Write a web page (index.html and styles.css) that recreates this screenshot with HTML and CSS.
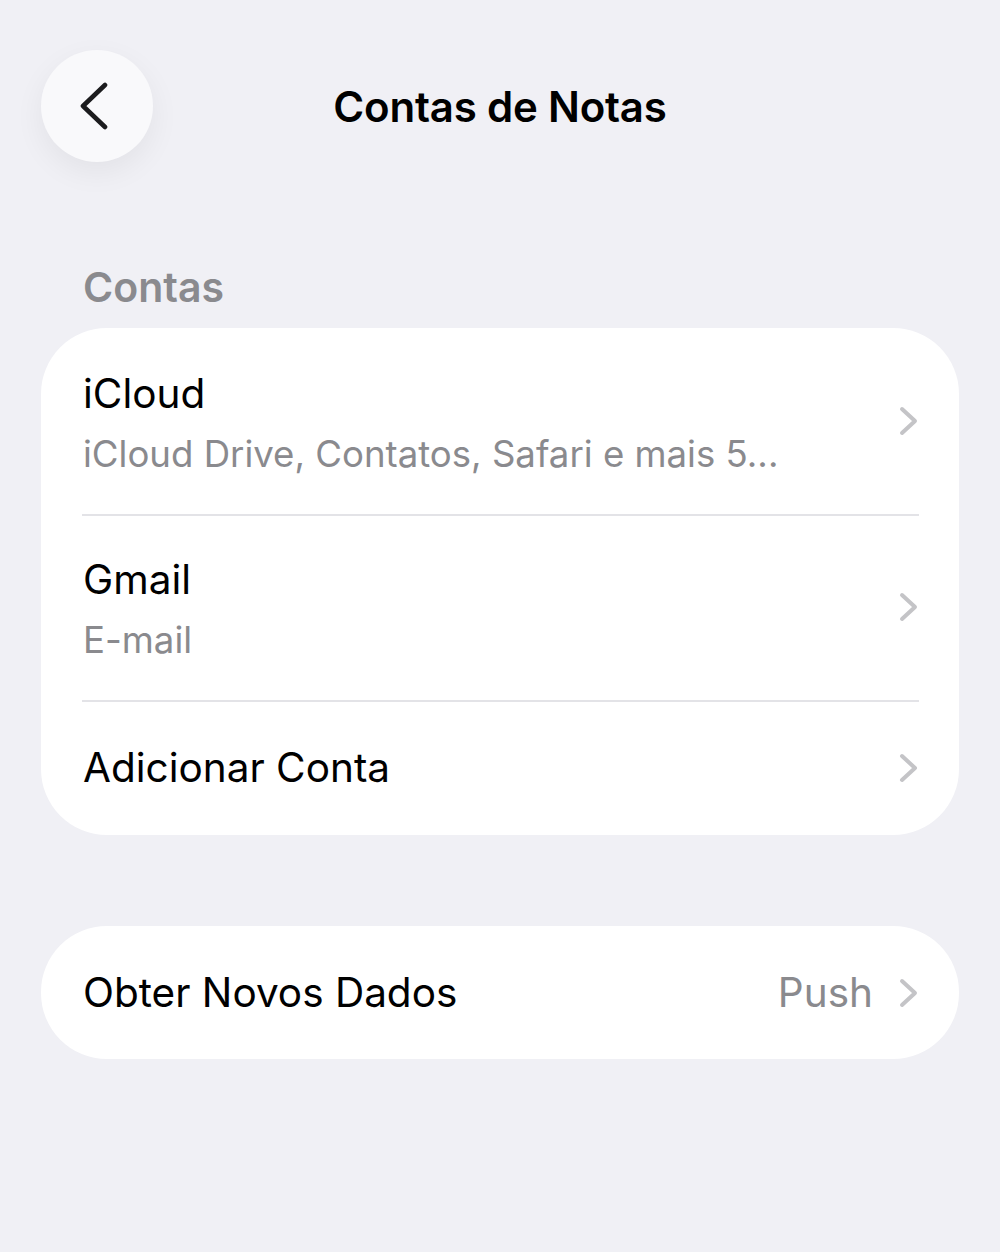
FILE: index.html
```html
<!DOCTYPE html>
<html lang="pt-BR">
<head>
    <meta charset="UTF-8">
    <meta name="viewport" content="width=device-width, initial-scale=1.0">
    <title>Contas de Notas</title>
    <link rel="stylesheet" href="styles.css">
</head>
<body>
    <!-- Navigation bar -->
    <header class="nav-bar">
        <button class="back-button" aria-label="Voltar">
            <svg width="30" height="48" viewBox="0 0 30 48">
                <path d="M26 3 L4 24 L26 45" fill="none" stroke="#1c1c1e" stroke-width="4.6" stroke-linecap="round" stroke-linejoin="round"/>
            </svg>
        </button>
        <h1 class="nav-title">Contas de Notas</h1>
        <div class="nav-spacer"></div>
    </header>

    <!-- Accounts -->
    <section class="group">
        <h2 class="group-title">Contas</h2>
        <div class="card">
            <a class="row row-double">
                <div class="row-text">
                    <div class="row-label">iCloud</div>
                    <div class="row-detail">iCloud Drive, Contatos, Safari e mais 5...</div>
                </div>
                <svg class="chevron" width="20" height="30" viewBox="0 0 20 30"><path d="M3 3 L16 15 L3 27"/></svg>
            </a>
            <a class="row row-double">
                <div class="row-text">
                    <div class="row-label">Gmail</div>
                    <div class="row-detail">E-mail</div>
                </div>
                <svg class="chevron" width="20" height="30" viewBox="0 0 20 30"><path d="M3 3 L16 15 L3 27"/></svg>
            </a>
            <a class="row">
                <div class="row-text">
                    <div class="row-label">Adicionar Conta</div>
                </div>
                <svg class="chevron" width="20" height="30" viewBox="0 0 20 30"><path d="M3 3 L16 15 L3 27"/></svg>
            </a>
        </div>
    </section>

    <!-- Fetch settings -->
    <section class="group group-plain">
        <div class="card">
            <a class="row row-single">
                <div class="row-text">
                    <div class="row-label">Obter Novos Dados</div>
                </div>
                <span class="row-value">Push</span>
                <svg class="chevron" width="20" height="30" viewBox="0 0 20 30"><path d="M3 3 L16 15 L3 27"/></svg>
            </a>
        </div>
    </section>
</body>
</html>
```

FILE: styles.css
```css
/* Main Styles */
body {
    font-family: Inter, "Noto Sans", Roboto, sans-serif;
    margin: 0;
    padding: 50px 41px 0 41px;
    background-color: #f0f0f5;
    color: #000;
    -webkit-font-smoothing: antialiased;
}

/* Navigation Bar */
.nav-bar {
    display: grid;
    grid-template-columns: 112px 1fr 112px;
    align-items: center;
}
.back-button {
    width: 112px;
    height: 112px;
    border: none;
    border-radius: 50%;
    background-color: #f9f9fb;
    box-shadow: 0 10px 30px rgba(0,0,0,0.06);
    display: flex;
    align-items: center;
    justify-content: center;
    padding: 0 6px 0 0;
    cursor: pointer;
}
.nav-title {
    margin: 0;
    text-align: center;
    font-size: 42px;
    font-weight: 600;
    letter-spacing: -0.2px;
}

/* Groups */
.group {
    margin-top: 98px;
}
.group-plain {
    margin-top: 91px;
}
.group-title {
    margin: 0 0 16px 42px;
    padding-top: 2px;
    font-size: 41px;
    line-height: 50px;
    font-weight: 600;
    color: #8a8a8e;
}
.card {
    background-color: white;
    border-radius: 66px;
    overflow: hidden;
}

/* Rows */
.row {
    display: flex;
    align-items: center;
    gap: 20px;
    height: 135px;
    padding: 0 40px 0 42px;
    position: relative;
    cursor: pointer;
}
.row-double {
    height: 186px;
}
.row-double .row-text {
    padding-top: 6px;
}
.row-single {
    height: 133px;
}
.row + .row::before {
    content: "";
    position: absolute;
    top: 0;
    left: 41px;
    right: 40px;
    height: 2px;
    background-color: #e3e3e7;
}
.row-text {
    flex: 1;
    min-width: 0;
}
.row-label {
    font-size: 40.5px;
    line-height: 50px;
}
.row-detail {
    margin-top: 10px;
    font-size: 36.6px;
    line-height: 50px;
    color: #8a8a8e;
    white-space: nowrap;
}
.row-value {
    font-size: 40.5px;
    color: #8a8a8e;
    margin-right: 6px;
}
.chevron {
    flex-shrink: 0;
}
.chevron path {
    fill: none;
    stroke: #c4c4c7;
    stroke-width: 4;
    stroke-linecap: round;
    stroke-linejoin: round;
}
```
